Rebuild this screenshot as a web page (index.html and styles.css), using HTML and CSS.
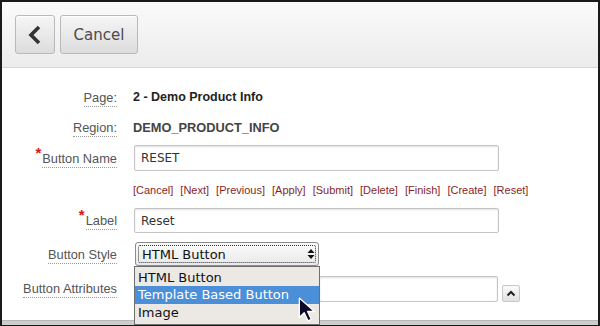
FILE: index.html
```html
<!DOCTYPE html>
<html>
<head>
<meta charset="utf-8">
<link rel="stylesheet" href="styles.css">
</head>
<body>
<div class="frame">
  <div class="header">
    <button class="btn back" aria-label="Back">
      <svg width="14" height="20" viewBox="0 0 14 20"><path d="M11 2 L3 10 L11 18" fill="none" stroke="#333" stroke-width="3.6" stroke-linejoin="miter"/></svg>
    </button>
    <button class="btn cancel">Cancel</button>
  </div>
  <div class="form">
    <div class="row r-page">
      <div class="lab"><span class="lt">Page:</span></div>
      <div class="val">2 - Demo Product Info</div>
    </div>
    <div class="row r-region">
      <div class="lab"><span class="lt">Region:</span></div>
      <div class="val">DEMO_PRODUCT_INFO</div>
    </div>
    <div class="row r-name">
      <div class="lab"><span class="req">*</span><span class="lt">Button Name</span></div>
      <div class="field"><div class="input">RESET</div></div>
    </div>
    <div class="row r-links">
      <div></div>
      <div class="links"><a>[Cancel]</a><a>[Next]</a><a>[Previous]</a><a>[Apply]</a><a>[Submit]</a><a>[Delete]</a><a>[Finish]</a><a>[Create]</a><a>[Reset]</a></div>
    </div>
    <div class="row r-label">
      <div class="lab"><span class="req">*</span><span class="lt">Label</span></div>
      <div class="field"><div class="input">Reset</div></div>
    </div>
    <div class="row r-style">
      <div class="lab"><span class="lt">Button Style</span></div>
      <div class="field">
        <div class="selwrap">
          <div class="select"><span class="focus">HTML Button</span><span class="spin"><svg width="8" height="12" viewBox="0 0 8 12"><path d="M4 1 L7.5 5 H0.5Z M4 11 L7.5 7 H0.5Z" fill="#111"/></svg></span></div>
          <ul class="menu">
            <li>HTML Button</li>
            <li class="hl">Template Based Button</li>
            <li>Image</li>
          </ul>
          <svg class="cursor" width="22" height="26" viewBox="0 0 20 24"><path d="M2 1 L2 19 L6.5 14.5 L10 22 L13 20.6 L9.6 13.4 L16 13.4 Z" fill="#0b0b2a" stroke="#fff" stroke-width="1.2" stroke-linejoin="round"/></svg>
        </div>
      </div>
    </div>
    <div class="row r-attr">
      <div class="lab"><span class="lt">Button Attributes</span></div>
      <div class="field attr"><div class="input"></div><button class="mini"><svg width="10" height="7" viewBox="0 0 10 7"><path d="M1.5 5.5 L5 2 L8.5 5.5" fill="none" stroke="#222" stroke-width="2"/></svg></button></div>
    </div>
  </div>
  <div class="footer"></div>
</div>
</body>
</html>
```
FILE: styles.css
```css
* { box-sizing: border-box; }
html, body { margin: 0; padding: 0; background: #fff; }
body { width: 600px; height: 326px; overflow: hidden; font-family: "Liberation Sans", Arial, sans-serif; }

.frame {
  width: 600px;
  height: 326px;
  border-top: 2px solid #1a1a1a;
  border-left: 2px solid #1a1a1a;
  border-right: 2px solid #1a1a1a;
  border-bottom: 1px solid #1a1a1a;
  display: flex;
  flex-direction: column;
  background: #fff;
}

.header {
  height: 66px;
  flex: none;
  background: linear-gradient(#fafafa, #ececec);
  border-bottom: 1px solid #d6d6d6;
  display: flex;
  align-items: flex-start;
  gap: 5px;
  padding: 13px 0 0 13px;
}

.btn {
  height: 39px;
  border: 1px solid #b9b9b9;
  border-radius: 3px;
  background: linear-gradient(#f6f6f6, #dcdcdc);
  box-shadow: inset 0 1px 0 #fff;
  margin: 0;
  padding: 0;
  display: flex;
  align-items: center;
  justify-content: center;
}
.back { width: 40px; }
.cancel {
  width: 78px;
  font-family: "DejaVu Sans", sans-serif;
  font-size: 15px;
  color: #4a4a4a;
}

.form {
  flex: 1;
  padding-top: 14px;
  display: flex;
  flex-direction: column;
}

.row {
  display: grid;
  grid-template-columns: 115px 1fr;
  column-gap: 16px;
  align-items: center;
}
.r-page { height: 30px; }
.r-region { height: 30px; }
.r-name { height: 32px; }
.r-links { height: 30px; }
.r-label { height: 33px; }
.r-style { height: 34px; }
.r-attr { height: 35px; }

.lab {
  text-align: right;
  font-size: 12.8px;
  color: #555;
  position: relative;
}
.lt {
  border-bottom: 1px dotted #9a9a9a;
  padding-bottom: 1px;
}
.req {
  color: #e01010;
  font-size: 15px;
  font-weight: bold;
  vertical-align: 5px;
  margin-right: 1px;
  line-height: 0;
}

.val {
  font-size: 12.5px;
  font-weight: bold;
  color: #222;
}
.r-region .val { color: #444; font-size: 12.8px; }

.field { display: flex; align-items: center; }
.input {
  width: 365px;
  height: 26px;
  border: 1px solid #c4c4c4;
  border-radius: 2px;
  box-shadow: inset 0 1px 2px rgba(0,0,0,0.12);
  background: #fff;
  font-family: "DejaVu Sans", sans-serif;
  font-size: 12px;
  color: #333;
  padding: 5px 0 0 6px;
  margin-left: 1px;
}
.r-label .input { height: 25px; }

.links {
  font-size: 11px;
  display: flex;
  gap: 7px;
  padding-top: 2px;
}
.links a { color: #8a1f1f; }

.selwrap { position: relative; margin-left: 2px; }
.select {
  width: 184px;
  height: 24px;
  border: 1px solid #8c8c8c;
  border-radius: 3px;
  background: linear-gradient(#fbfbfb, #e9e9e9);
  padding: 2px;
  display: flex;
  font-family: "DejaVu Sans", sans-serif;
  font-size: 13px;
  color: #111;
}
.focus {
  flex: 1;
  border: 1px dotted #333;
  border-radius: 2px;
  display: flex;
  align-items: center;
  padding-left: 3px;
}
.spin {
  position: absolute;
  right: 4px;
  top: 6px;
  display: flex;
}

.menu {
  position: absolute;
  left: -1px;
  top: 24px;
  width: 186px;
  margin: 0;
  padding: 0 0 2px 0;
  list-style: none;
  background: #ece9e5;
  border: 1px solid #6f6f6f;
  font-family: "DejaVu Sans", sans-serif;
  font-size: 13px;
  color: #111;
  z-index: 2;
}
.menu li {
  height: 18px;
  line-height: 18px;
  padding-left: 3px;
}
.menu li:first-child { height: 19px; line-height: 21px; }
.menu li.hl { background: #4a8fd8; color: #fff; }

.cursor {
  position: absolute;
  left: 162px;
  top: 55px;
  z-index: 3;
}

.attr .input { margin-left: 186px; width: 179px; height: 26px; }
.mini {
  width: 18px;
  height: 17px;
  margin: 9px 0 0 4px;
  padding: 0;
  border: 1px solid #c8c8c8;
  border-radius: 2px;
  background: linear-gradient(#fafafa, #e2e2e2);
  display: flex;
  align-items: center;
  justify-content: center;
}

.footer {
  height: 5px;
  flex: none;
  background: #cdcdcd;
  border-top: 1px solid #b8b8b8;
}
```
